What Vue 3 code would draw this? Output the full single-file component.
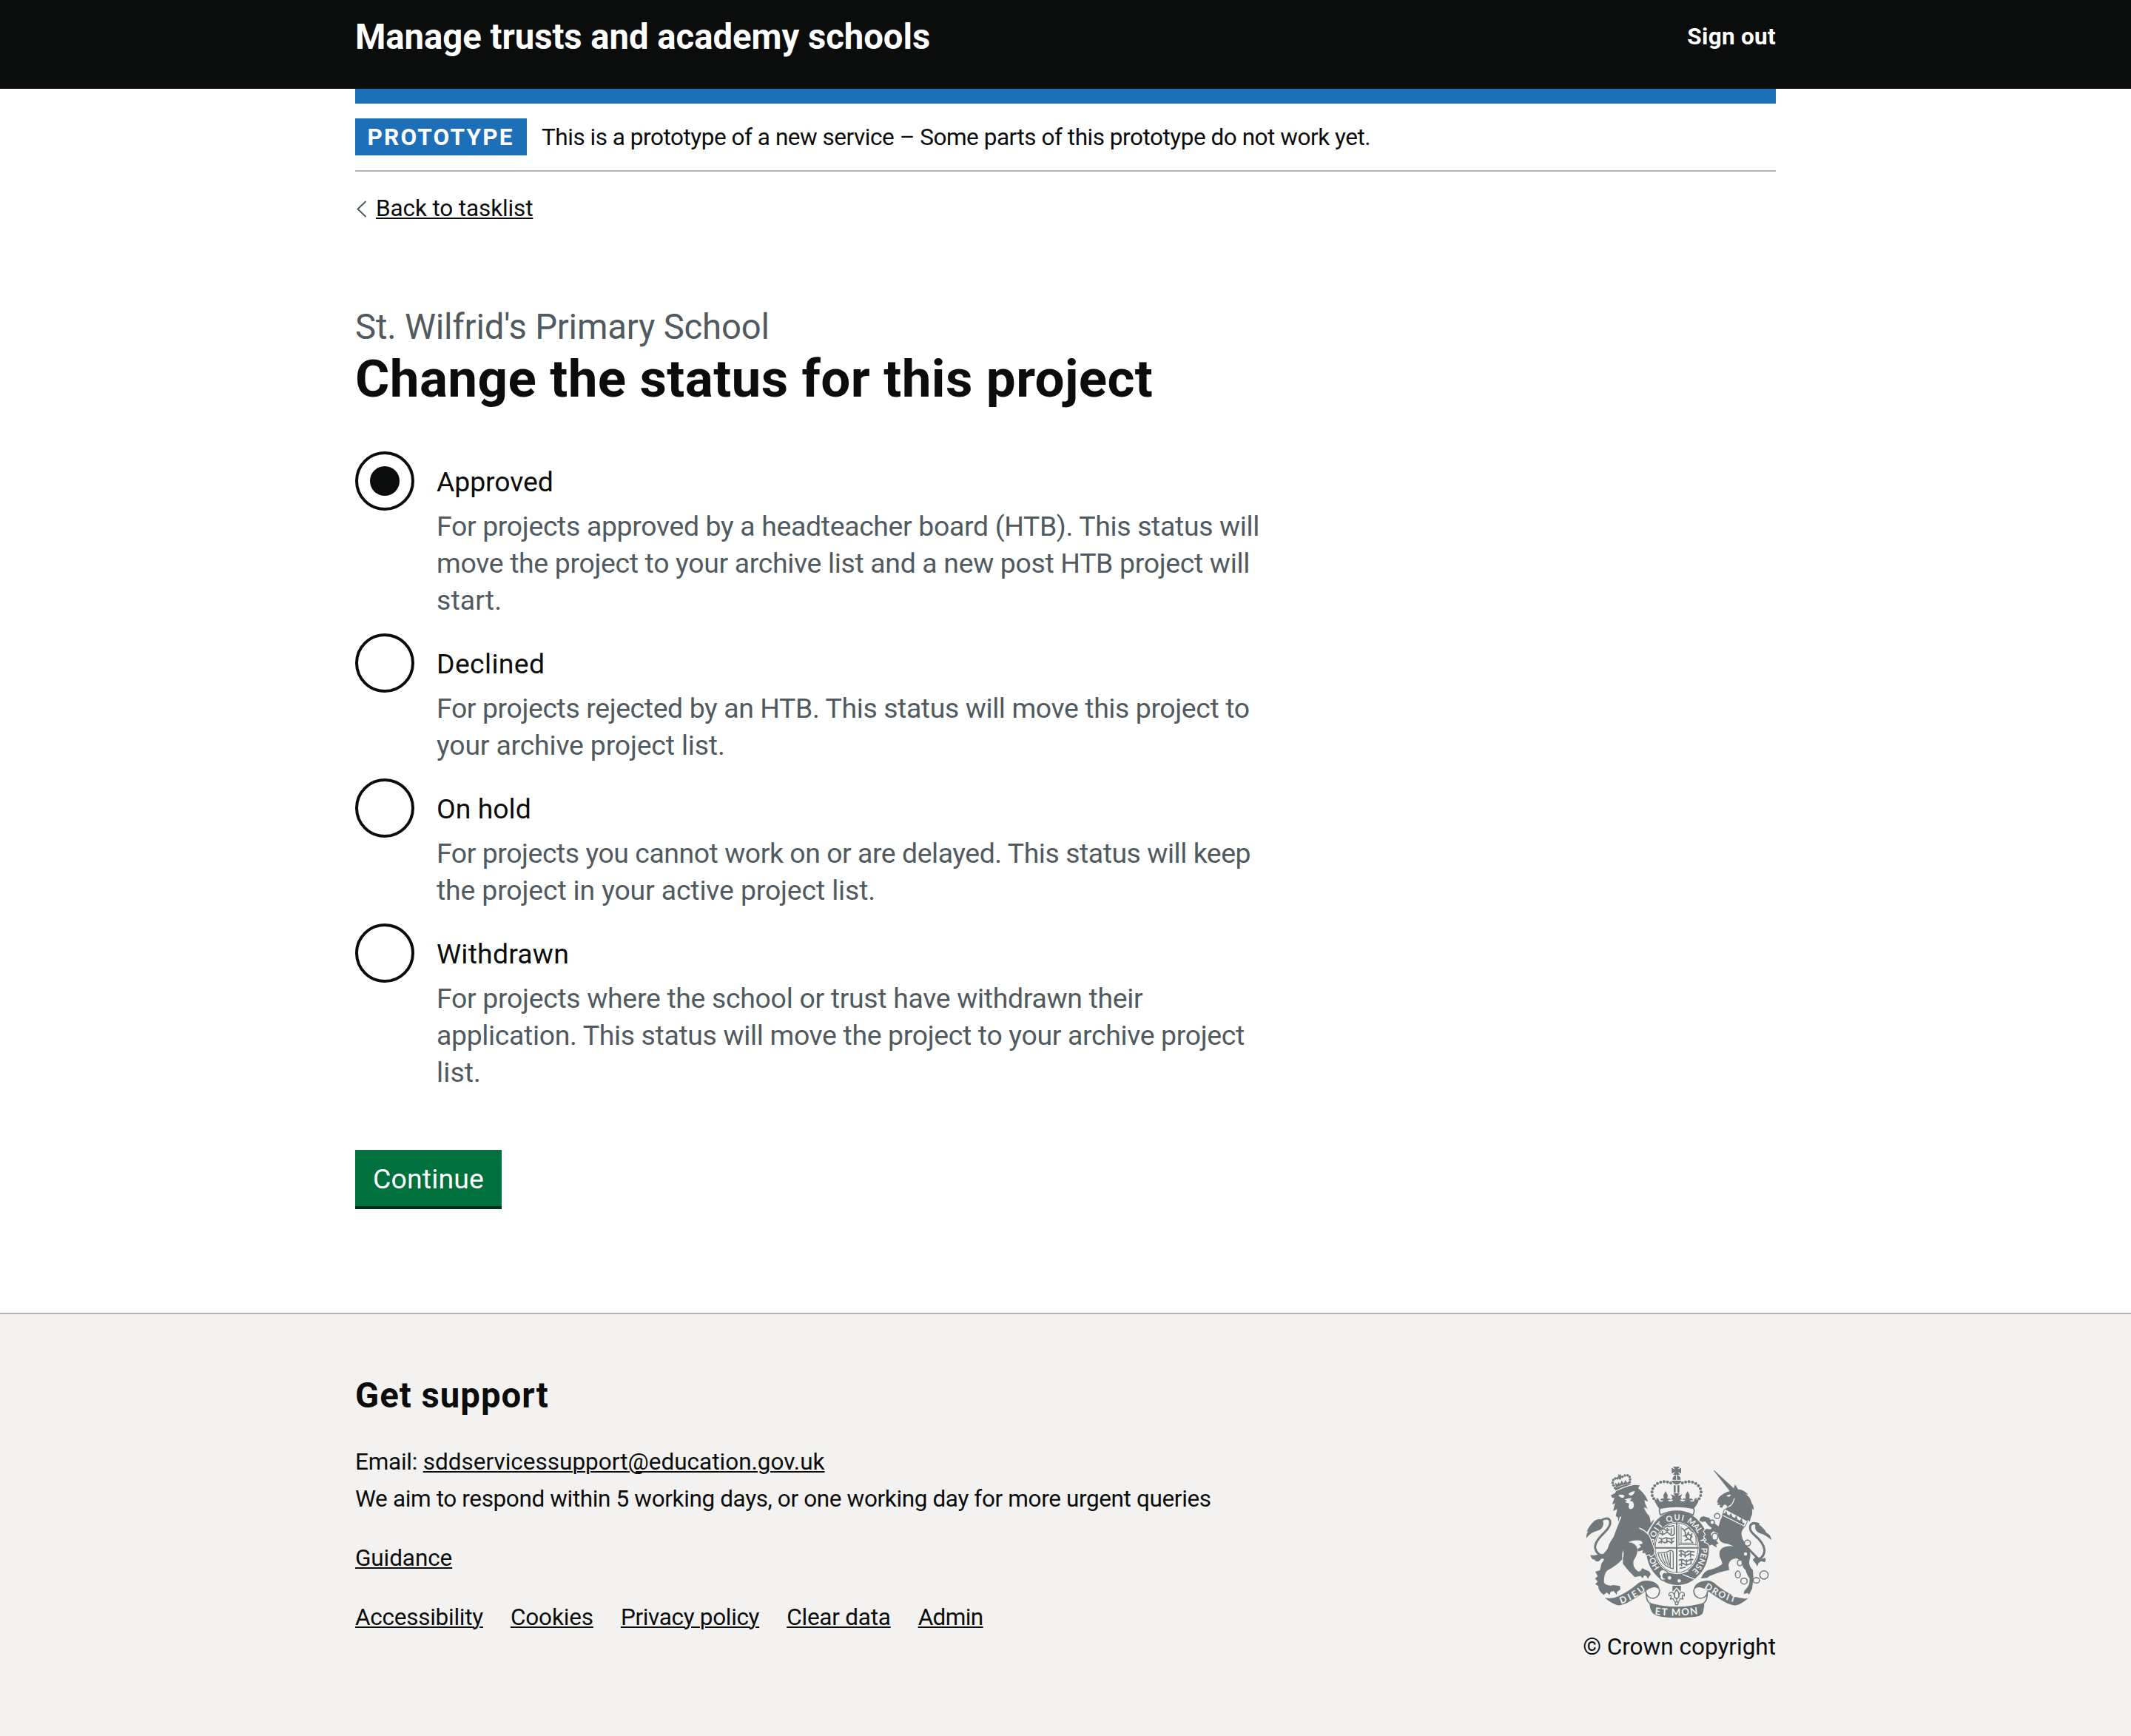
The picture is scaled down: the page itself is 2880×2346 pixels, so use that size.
<script setup>
import { ref } from 'vue'

const selected = ref('approved')

const options = [
  {
    id: 'approved',
    label: { text: 'Approved', tracking: -0.1 },
    hint: [
      { text: 'For projects approved by a headteacher board (HTB). This status will', tracking: -0.34 },
      { text: 'move the project to your archive list and a new post HTB project will', tracking: -0.33 },
      { text: 'start.', tracking: 0.1 },
    ],
  },
  {
    id: 'declined',
    label: { text: 'Declined', tracking: 0.35 },
    hint: [
      { text: 'For projects rejected by an HTB. This status will move this project to', tracking: -0.39 },
      { text: 'your archive project list.', tracking: -0.18 },
    ],
  },
  {
    id: 'on-hold',
    label: { text: 'On hold', tracking: 0 },
    hint: [
      { text: 'For projects you cannot work on or are delayed. This status will keep', tracking: -0.45 },
      { text: 'the project in your active project list.', tracking: -0.15 },
    ],
  },
  {
    id: 'withdrawn',
    label: { text: 'Withdrawn', tracking: 0.2 },
    hint: [
      { text: 'For projects where the school or trust have withdrawn their', tracking: -0.31 },
      { text: 'application. This status will move the project to your archive project', tracking: -0.34 },
      { text: 'list.', tracking: 0.1 },
    ],
  },
]

const footerLinks = [
  { text: 'Accessibility', tracking: -0.26 },
  { text: 'Cookies', tracking: -0.15 },
  { text: 'Privacy policy', tracking: -0.33 },
  { text: 'Clear data', tracking: -0.24 },
  { text: 'Admin', tracking: -0.6 },
]

const track = (item) => ({ letterSpacing: item.tracking + 'px' })

// Pearls on the arches of the central crown: [x, y]
const pearls = [
  [325, 176], [315, 166], [309, 153], [308, 139], [311, 125], [319, 113], [330, 104], [343, 99], [357, 97], [371, 98], [384, 102],
  [490, 176], [499, 166], [505, 153], [507, 139], [504, 125], [496, 113], [485, 104], [472, 99], [458, 97], [444, 98], [431, 102],
]
const lionPearls = [
  [158, 122], [152, 112], [148, 101], [151, 90], [159, 84], [168, 83], [188, 77], [198, 72], [209, 71], [217, 77], [219, 88], [218, 99],
]
// Links of the unicorn's chain: [cx, cy, rx, ry]
const chain = [
  [572, 236, 11, 10], [552, 262, 9, 9], [563, 320, 12, 14], [695, 346, 12, 12], [687, 390, 9, 9], [664, 426, 10, 12],
  [656, 473, 10, 14], [681, 500, 13, 12], [731, 497, 13, 11], [762, 475, 17, 17],
]
// Motto words placed along the garter
const garterWords = [
  { text: 'HO', at: 107, length: 50 },
  { text: 'SOIT', at: 228, length: 84 },
  { text: 'QUI', at: 322, length: 68 },
  { text: 'MAL', at: 403, length: 66 },
  { text: 'Y', at: 466, length: 20 },
  { text: 'PENSE', at: 547, length: 104 },
]
</script>

<template>
  <div class="page">
    <header class="header">
      <div class="container header-row">
        <a class="service">Manage trusts and academy schools</a>
        <a class="sign-out">Sign out</a>
      </div>
    </header>

    <div class="container">
      <div class="phase">
        <strong class="tag">PROTOTYPE</strong>
        <span class="phase-text">This is a prototype of a new service – Some parts of this prototype do not work yet.</span>
      </div>

      <a class="back">
        <svg class="chevron" viewBox="0 0 28 40" width="28" height="40" aria-hidden="true">
          <path d="M14.5 10 3.5 20.5l11 10.5" />
        </svg>
        <span class="link back-text">Back to tasklist</span>
      </a>

      <main class="main">
        <span class="caption">St. Wilfrid's Primary School</span>
        <h1 class="title">Change the status for this project</h1>

        <div class="radios" role="radiogroup">
          <div
            v-for="option in options"
            :key="option.id"
            class="option"
            role="radio"
            :aria-checked="selected === option.id"
            @click="selected = option.id"
          >
            <span class="circle"><span v-if="selected === option.id" class="dot"></span></span>
            <div class="option-body">
              <div class="label"><span :style="track(option.label)">{{ option.label.text }}</span></div>
              <div class="hint">
                <div v-for="line in option.hint" :key="line.text" :style="track(line)">{{ line.text }}</div>
              </div>
            </div>
          </div>
        </div>

        <button class="button" type="button">Continue</button>
      </main>
    </div>

    <footer class="footer">
      <div class="container footer-row">
        <div class="support">
          <h2 class="support-title">Get support</h2>
          <div class="line"><span class="email-label">Email: </span><a class="link">sddservicessupport@education.gov.uk</a></div>
          <div class="line aim">We aim to respond within 5 working days, or one working day for more urgent queries</div>
          <div class="line guidance"><a class="link">Guidance</a></div>
          <nav class="links">
            <a v-for="item in footerLinks" :key="item.text" class="link" :style="track(item)">{{ item.text }}</a>
          </nav>
        </div>

        <div class="crown">
          <svg class="arms" viewBox="39 36 756 636" width="252" height="212" aria-hidden="true">
            <defs>
              <path id="garter-path" d="M411 481A97 114 0 0 1 411 253A97 114 0 0 1 411 481" />
              <path id="scroll-left" d="M182 592Q238 574 287 533" />
              <path id="scroll-mid" d="M319 635Q407 646 497 634" />
              <path id="scroll-right" d="M519 528Q580 570 646 588" />
            </defs>

            <!-- garter and shield -->
            <ellipse class="ink" cx="411" cy="366" rx="128" ry="150" />
            <ellipse class="paper" cx="408" cy="365" rx="91" ry="105" />
            <ellipse class="thin" cx="408" cy="365" rx="87" ry="101" />
            <path class="cross" d="M408 262V468M320 365H496" />
            <path class="thin" d="M417 270V356M417 352H489M486 315V356M426 277V345M421 346H477" />
            <path class="scribble" d="M343 292q12-9 18 0t18-2M358 283q10-9 20-4l20-4M340 306q14 8 22 0t18 4 20-4M335 325l14 5 16-6 18 5 16-5M334 345l12-8 14 8 14-7 12 7 12-8M350 296v20M370 284v20M386 286v24M398 280v26M346 328v20M368 326v20M388 326v24" />
            <path class="scribble" d="M428 286q16 8 16 24t20 24l10 12M436 296l22-13 6 10 12 8M434 318l24-8 14 12M440 336l18-8M458 300l-14 22M470 306l-8 30" />
            <path class="scribble" d="M417 380q10-8 18 0t20-2l26 4M417 396l14-6 14 8 14-8 20 6M417 416q14-8 22 0t18 0 18-2M417 434l18-6 12 8 20-8M420 448l24-4M426 378v24M442 380v24M464 378v26M428 412v28M448 412v24M466 408v24" />
            <path class="harp" d="M332 386Q366 386 380 376 394 374 394 386V450Q346 440 332 386ZM346 390Q350 414 364 430M357 388Q362 416 374 438M368 386Q371 416 382 440M382 380V444" />
            <text v-for="word in garterWords" :key="word.text" class="motto" font-size="33" text-anchor="middle">
              <textPath href="#garter-path" :startOffset="word.at" :textLength="word.length">{{ word.text }}</textPath>
            </text>
            <path class="paper-line" d="M366 460Q410 480 456 458M432 473L480 492" />
            <path class="ring" d="M338 462Q350 446 364 458 374 464 370 472 352 464 352 480 354 490 366 488 364 498 348 496 336 490 342 480 334 474 338 462Z" />
            <circle class="paper" cx="379" cy="487" r="7" />
            <circle class="paper" cx="418" cy="499" r="7" />

            <!-- lion -->
            <g class="ink">
              <circle v-for="(p, i) in lionPearls" :key="'l' + i" :cx="p[0]" :cy="p[1]" r="5.2" />
              <path d="M160 134L158 124Q190 107 222 107L224 112Q190 118 160 134Z" />
              <path d="M162 120L157 100 167 108 173 98 178 107 185 92 193 104 200 90 207 102 218 93 217 106Q188 108 162 120Z" />
              <path d="M170 66L176 70 181 65 182 74 189 75 182 80 183 88H173L174 81 166 79 172 75Z" />
              <path
                class="beast"
                d="M141 152L158 143 162 136Q196 118 236 110L258 112 252 124 262 133Q282 150 292 178L277 172Q280 192 291 207L275 200Q282 222 297 236 301 250 303 264L316 249Q315 262 301 280L287 302 Q296 314 304 336L318 378 314 392 303 400 298 391 285 396 280 386 268 386 272 374 252 380 250 370 264 360 255 352 270 348 266 338Q245 330 212 342 245 345 250 373 248 395 233 418 228 445 252 461L262 459 268 447 280 454 296 460 303 472 291 491 286 480 276 477 270 489 262 479 238 484Q212 460 190 430L190 405Q196 392 190 374 186 388 187 412 165 438 128 456 112 470 113 505 120 518 140 518L152 516 178 520 180 534 166 544 165 556 152 540 140 544 136 556 124 546 112 556Q90 540 90 520L78 512 88 502 77 490 88 480 78 462 97 456 103 430 114 412 113 390 126 380Q130 350 152 322 166 282 184 240L178 238 171 262 170 242 161 236 167 208 150 216 158 184 146 190 156 162Q146 166 141 152Z"
              />
            </g>
            <path class="paper" d="M172 151Q183 147 197 154L193 161Q180 166 172 151ZM212 148Q222 136 238 135 236 150 222 154ZM196 170L211 164 226 165 218 175 230 178Q236 186 234 198 228 212 216 206 210 198 216 186L198 180 208 174Z" />
            <path class="paper-line" d="M256 285Q278 293 292 310" />
            <g class="ink">
              <path d="M42 326Q40 309 50 298L43 300Q52 279 65 265 80 247 98 249 114 252 110 272 106 290 86 296 58 302 42 326Z" />
              <path d="M58 394Q68 398 81 394L105 389Q118 390 121 403L116 413Q104 405 99 413 88 426 78 417L73 412Q63 414 58 394Z" />
            </g>
            <path class="tail" d="M101 254Q131 237 138 256 143 276 114 304 72 344 78 368 82 388 108 400L132 372" />

            <!-- unicorn -->
            <g class="ink">
              <path d="M557 51L561 52 643 127 626 139Z" />
              <path d="M571 181L578 162Q598 140 628 134L640 122 645 108 657 128Q676 128 690 142L698 149 687 148Q706 158 712 183 722 198 720 212L713 206Q718 228 708 244L704 260 698 252 694 258 602 209 614 202 Q612 190 602 190 596 192 592 203L582 200 584 190 575 193 573 186 580 184Z" />
              <path
                class="beast"
                d="M594 234L684 280Q666 300 672 318 678 342 700 366 712 390 702 420 700 440 717 455L719 488 714 530 701 556 696 548 680 553 682 540 695 525 702 512 704 490Q690 470 688 456 678 450 674 436 668 412 650 408 622 410 618 434L621 455Q580 462 540 480L532 487 506 489Q516 464 534 456 565 450 593 431 592 418 584 406 574 372 600 362 620 354 640 360 620 348 598 346 580 340 576 318L574 306 556 298 546 308 550 324 566 332 578 348 568 352 570 364 550 352 542 356 534 346 522 342 530 334 519 320 526 312 518 298 528 288 546 290 550 284 536 274 524 258 512 260 500 255 504 242 516 237 540 244 548 256 578 278Q582 256 594 234Z"
              />
              <path d="M792 334Q789 312 773 304L775 310Q767 292 752 279 735 262 719 265 730 272 726 284 728 298 745 306 768 312 792 334Z" />
              <path d="M716 414L732 398 749 410 767 406Q771 413 766 424L750 419 740 427 735 440 728 428Z" />
            </g>
            <path class="tail" d="M742 270Q714 258 706 276 702 296 722 312 762 346 764 374 764 400 740 412L696 366" />
            <path class="paper" d="M609 156Q617 147 628 150L622 158Z" />
            <path class="paper-line" d="M616 200Q636 192 642 164" />
            <path class="paper" d="M601 208L692 257 682 281 592 235Z" />
            <path class="ink" d="M598 224L604 226 608 214 614 230 622 234 628 224 634 240 643 244 650 234 655 250 664 255 672 244 675 262 684 266 680 274 594 231Z" />
            <path class="thin" d="M602 208L592 236 684 281 695 258" />
            <ellipse v-for="(c, i) in chain" :key="'c' + i" class="ring" :cx="c[0]" :cy="c[1]" :rx="c[2]" :ry="c[3]" />

            <!-- crown -->
            <path class="ink" d="M393 36H421L412 47 426 41V64L412 57 421 69H393L402 57 388 64V41L402 47ZM391 86Q394 72 407 70 422 72 424 86V89H391ZM388 93H427Q424 106 408 109 391 106 388 93ZM396 112H404V142H396ZM411 112H419V142H411Z" />
            <path class="paper-line" d="M407 69V89" />
            <circle v-for="(p, i) in pearls" :key="'p' + i" class="ink" :cx="p[0]" :cy="p[1]" r="6" />
            <path class="ink" d="M317 164L328 173 325 162Q336 164 337 176 347 180 355 174 347 172 341 172 344 163 356 166L354 152 363 135 372 152 370 166Q382 162 384 171 376 168 372 173 384 182 395 171L385 169 391 161 384 148 402 155 395 144H420L413 155 431 148 424 161 430 169 420 171Q431 182 443 173 439 168 431 171 433 162 445 166L443 152 452 135 461 152 459 166Q471 163 474 172 468 172 460 174 468 180 478 176 479 164 490 162L487 173 498 164Q496 188 474 209 408 192 340 209 322 190 317 164Z" />
            <path class="band" d="M342 232Q332 206 346 204 408 192 470 204 486 206 474 232Q408 200 342 232Z" />

            <!-- scrolls -->
            <path class="curl" d="M282 540Q286 570 314 570 342 562 338 534M284 550Q284 582 302 592M534 540Q530 570 502 570 474 562 478 534M532 550Q532 582 514 592" />
            <path class="ink" d="M116 568Q146 575 174 560 215 540 244 515 262 497 290 498 336 502 340 538 326 520 306 527 294 530 284 540 240 570 206 589 182 600 168 598 146 592 116 568Z" />
            <path class="ink" d="M698 569Q670 575 640 560 600 540 569 515 552 497 530 498 480 502 476 538 490 520 510 527 524 530 534 540 576 570 610 589 634 600 650 598 672 592 698 569Z" />
            <path class="ink" d="M298 588Q408 620 518 588L520 600 514 630Q504 644 472 646 402 652 344 644 318 640 309 628 298 610 298 588Z" />
            <text class="motto" font-size="37"><textPath href="#scroll-left" textLength="116">DIEU</textPath></text>
            <text class="motto" font-size="40"><textPath href="#scroll-mid" textLength="176">ET MON</textPath></text>
            <text class="motto" font-size="37"><textPath href="#scroll-right" textLength="138">DROIT</textPath></text>
            <path class="ink" d="M391 519H425V543L417 535 408 525 399 535 391 543Z" />
            <path class="fleur" d="M408 534q-15 18-5 36h10q10-18-5-36zM399 568q1-22-13-23-12 2-9 15l7-3q4 9-2 16l12-2q2 9 8 14M417 568q-1-22 13-23 12 2 9 15l-7-3q-4 9 2 16l-12-2q-2 9-8 14M408 572v14" />
            <circle class="fleur" cx="408" cy="590" r="6" />
          </svg>
          <span class="copyright">© Crown copyright</span>
        </div>
      </div>
    </footer>
  </div>
</template>

<style>
body {
  background: #fff;
}
</style>

<style scoped>
.page {
  font-family: Roboto, "Liberation Sans", sans-serif;
  font-size: 31.5px;
  line-height: 50px;
  color: #0b0c0c;
}
.container {
  width: 1920px;
  margin: 0 auto;
}
.header {
  height: 120px;
  background: #0b0c0c;
  color: #fff;
  font-weight: 700;
}
.header-row {
  display: flex;
  justify-content: space-between;
  align-items: flex-start;
}
.service {
  margin-top: 20px;
  font-size: 47.3px;
  line-height: 60px;
  letter-spacing: -0.05px;
}
.sign-out {
  margin-top: 30px;
  line-height: 40px;
  letter-spacing: 0.3px;
}
.phase {
  display: flex;
  gap: 20px;
  height: 50px;
  padding: 20px 0;
  border-top: 20px solid #1d70b8;
  border-bottom: 2px solid #b1b4b6;
  line-height: 52px;
}
.tag {
  box-sizing: border-box;
  width: 232px;
  height: 50px;
  padding-left: 16.5px;
  background: #1d70b8;
  color: #fff;
  font-weight: 700;
  letter-spacing: 2.2px;
}
.phase-text {
  letter-spacing: -0.47px;
}
.link {
  text-decoration: underline;
  text-decoration-thickness: 2px;
  text-underline-offset: 2px;
}
.back {
  display: flex;
  width: max-content;
  margin-top: 30px;
  line-height: 40px;
}
.back-text {
  letter-spacing: -0.12px;
}
.chevron {
  fill: none;
  stroke: #505a5f;
  stroke-width: 2;
}
.main {
  margin-top: 110px;
}
.caption {
  display: block;
  color: #505a5f;
  font-size: 47.3px;
  line-height: 60px;
  letter-spacing: -0.2px;
}
.title {
  margin: 0 0 58px;
  font-size: 71px;
  line-height: 80px;
  font-weight: 700;
  letter-spacing: 0.38px;
}
.radios {
  font-size: 37.4px;
}
.option {
  display: flex;
  align-items: flex-start;
  gap: 30px;
  margin-bottom: 20px;
}
.circle {
  box-sizing: border-box;
  display: flex;
  align-items: center;
  justify-content: center;
  flex: none;
  width: 80px;
  height: 80px;
  border: 4px solid #0b0c0c;
  border-radius: 50%;
}
.dot {
  width: 40px;
  height: 40px;
  border-radius: 50%;
  background: #0b0c0c;
}
.option-body {
  padding-top: 16px;
  white-space: nowrap;
}
.hint {
  margin-top: 10px;
  color: #505a5f;
}
.button {
  display: block;
  width: 198px;
  height: 76px;
  margin: 80px 0 0;
  padding: 2px 0 0;
  border: 0;
  background: #00703c;
  box-shadow: 0 4px 0 #002d18;
  color: #fff;
  font: 400 37.4px/74px Roboto, "Liberation Sans", sans-serif;
  letter-spacing: 0.15px;
  text-align: center;
}
.footer {
  margin-top: 144px;
  padding: 80px 0 96px;
  border-top: 2px solid #b1b4b6;
  background: #f3f2f1;
}
.footer-row {
  display: flex;
  justify-content: space-between;
  align-items: flex-end;
}
.support {
  padding-bottom: 39px;
}
.support-title {
  margin: 0 0 35px;
  font-size: 47.3px;
  line-height: 60px;
  font-weight: 700;
  letter-spacing: 1px;
}
.line {
  white-space: pre;
}
.email-label {
  letter-spacing: -0.25px;
}
.aim {
  letter-spacing: -0.37px;
}
.guidance {
  margin-top: 30px;
  letter-spacing: -0.1px;
}
.links {
  display: flex;
  gap: 37px;
  margin-top: 30px;
}
.crown {
  display: flex;
  flex-direction: column;
  align-items: center;
}
.arms {
  display: block;
  margin: 0 2px 6px 0;
}
.copyright {
  height: 50px;
  line-height: 52px;
}
.ink {
  fill: #70787b;
}
.paper {
  fill: #f3f2f1;
}
.beast {
  stroke: #f3f2f1;
  stroke-width: 7;
  stroke-linejoin: round;
  paint-order: stroke;
}
.paper-line,
.tail,
.ring,
.thin,
.cross,
.scribble,
.harp,
.band,
.curl,
.fleur {
  fill: none;
  stroke: #70787b;
  stroke-linejoin: round;
}
.paper-line {
  stroke: #f3f2f1;
  stroke-width: 4;
}
.tail {
  stroke-width: 9;
}
.ring {
  fill: #f3f2f1;
  stroke-width: 4.5;
}
.thin {
  stroke-width: 3;
}
.cross {
  stroke-width: 6;
}
.scribble {
  stroke-width: 5;
}
.harp {
  stroke-width: 4;
}
.band {
  fill: #f3f2f1;
  stroke-width: 5;
}
.curl {
  stroke-width: 5;
}
.fleur {
  fill: #f3f2f1;
  stroke-width: 4;
}
.motto {
  fill: #f3f2f1;
  font-family: Lato, "Liberation Sans", sans-serif;
  font-weight: 700;
}
</style>
